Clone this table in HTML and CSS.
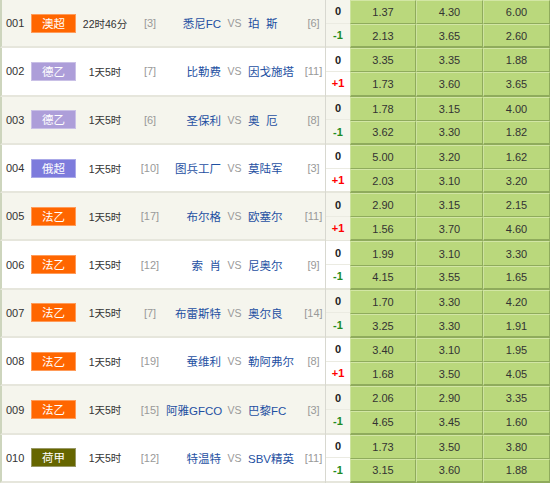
FILE: index.html
```html
<!DOCTYPE html>
<html lang="zh">
<head>
<meta charset="utf-8">
<title>赛事赔率</title>
<link rel="stylesheet" href="styles.css">
</head>
<body>
<div class="board">
  <div class="match alt">
    <div class="info">
      <span class="num">001</span><span class="badge orange">澳超</span><span class="time">22时46分</span><span class="rank">[3]</span><span class="home">悉尼FC</span><span class="vs">VS</span><span class="away">珀&nbsp;&nbsp;斯</span><span class="rank">[6]</span>
    </div>
    <div class="hc"><span class="zero">0</span><span class="minus">-1</span></div>
    <div class="odds"><span>1.37</span><span>4.30</span><span>6.00</span><span>2.13</span><span>3.65</span><span>2.60</span></div>
  </div>
  <div class="match">
    <div class="info">
      <span class="num">002</span><span class="badge purple">德乙</span><span class="time">1天5时</span><span class="rank">[7]</span><span class="home">比勒费</span><span class="vs">VS</span><span class="away">因戈施塔</span><span class="rank">[11]</span>
    </div>
    <div class="hc"><span class="zero">0</span><span class="plus">+1</span></div>
    <div class="odds"><span>3.35</span><span>3.35</span><span>1.88</span><span>1.73</span><span>3.60</span><span>3.65</span></div>
  </div>
  <div class="match alt">
    <div class="info">
      <span class="num">003</span><span class="badge purple">德乙</span><span class="time">1天5时</span><span class="rank">[6]</span><span class="home">圣保利</span><span class="vs">VS</span><span class="away">奥&nbsp;&nbsp;厄</span><span class="rank">[8]</span>
    </div>
    <div class="hc"><span class="zero">0</span><span class="minus">-1</span></div>
    <div class="odds"><span>1.78</span><span>3.15</span><span>4.00</span><span>3.62</span><span>3.30</span><span>1.82</span></div>
  </div>
  <div class="match">
    <div class="info">
      <span class="num">004</span><span class="badge blue">俄超</span><span class="time">1天5时</span><span class="rank">[10]</span><span class="home">图兵工厂</span><span class="vs">VS</span><span class="away">莫陆军</span><span class="rank">[3]</span>
    </div>
    <div class="hc"><span class="zero">0</span><span class="plus">+1</span></div>
    <div class="odds"><span>5.00</span><span>3.20</span><span>1.62</span><span>2.03</span><span>3.10</span><span>3.20</span></div>
  </div>
  <div class="match alt">
    <div class="info">
      <span class="num">005</span><span class="badge orange">法乙</span><span class="time">1天5时</span><span class="rank">[17]</span><span class="home">布尔格</span><span class="vs">VS</span><span class="away">欧塞尔</span><span class="rank">[11]</span>
    </div>
    <div class="hc"><span class="zero">0</span><span class="plus">+1</span></div>
    <div class="odds"><span>2.90</span><span>3.15</span><span>2.15</span><span>1.56</span><span>3.70</span><span>4.60</span></div>
  </div>
  <div class="match">
    <div class="info">
      <span class="num">006</span><span class="badge orange">法乙</span><span class="time">1天5时</span><span class="rank">[12]</span><span class="home">索&nbsp;&nbsp;肖</span><span class="vs">VS</span><span class="away">尼奥尔</span><span class="rank">[9]</span>
    </div>
    <div class="hc"><span class="zero">0</span><span class="minus">-1</span></div>
    <div class="odds"><span>1.99</span><span>3.10</span><span>3.30</span><span>4.15</span><span>3.55</span><span>1.65</span></div>
  </div>
  <div class="match alt">
    <div class="info">
      <span class="num">007</span><span class="badge orange">法乙</span><span class="time">1天5时</span><span class="rank">[7]</span><span class="home">布雷斯特</span><span class="vs">VS</span><span class="away">奥尔良</span><span class="rank">[14]</span>
    </div>
    <div class="hc"><span class="zero">0</span><span class="minus">-1</span></div>
    <div class="odds"><span>1.70</span><span>3.30</span><span>4.20</span><span>3.25</span><span>3.30</span><span>1.91</span></div>
  </div>
  <div class="match">
    <div class="info">
      <span class="num">008</span><span class="badge orange">法乙</span><span class="time">1天5时</span><span class="rank">[19]</span><span class="home">蚕维利</span><span class="vs">VS</span><span class="away">勒阿弗尔</span><span class="rank">[8]</span>
    </div>
    <div class="hc"><span class="zero">0</span><span class="plus">+1</span></div>
    <div class="odds"><span>3.40</span><span>3.10</span><span>1.95</span><span>1.68</span><span>3.50</span><span>4.05</span></div>
  </div>
  <div class="match alt">
    <div class="info">
      <span class="num">009</span><span class="badge orange">法乙</span><span class="time">1天5时</span><span class="rank">[15]</span><span class="home">阿雅GFCO</span><span class="vs">VS</span><span class="away">巴黎FC</span><span class="rank">[3]</span>
    </div>
    <div class="hc"><span class="zero">0</span><span class="minus">-1</span></div>
    <div class="odds"><span>2.06</span><span>2.90</span><span>3.35</span><span>4.65</span><span>3.45</span><span>1.60</span></div>
  </div>
  <div class="match">
    <div class="info">
      <span class="num">010</span><span class="badge olive">荷甲</span><span class="time">1天5时</span><span class="rank">[12]</span><span class="home">特温特</span><span class="vs">VS</span><span class="away">SBV精英</span><span class="rank">[11]</span>
    </div>
    <div class="hc"><span class="zero">0</span><span class="minus">-1</span></div>
    <div class="odds"><span>1.73</span><span>3.50</span><span>3.80</span><span>3.15</span><span>3.60</span><span>1.88</span></div>
  </div>
</div>
</body>
</html>
```
FILE: styles.css
```css
html, body {
  margin: 0;
  padding: 0;
  background: #ffffff;
}

body {
  font-family: "Liberation Sans", "Noto Sans CJK SC", sans-serif;
  font-size: 11px;
  color: #333333;
}

.board {
  width: 550px;
  height: 483px;
  display: flex;
  flex-direction: column;
}

.match {
  flex: 1;
  display: flex;
  background: #ffffff;
  min-height: 0;
}

.match.alt {
  background: #f5f5ed;
}

.info {
  width: 325px;
  display: grid;
  grid-template-columns: 29px 45px 58px 32px 55px 27px 54px 23px;
  align-items: center;
  border-left: 2px solid #cdd5bd;
  border-bottom: 2px solid #e6e6dc;
  box-sizing: border-box;
  white-space: nowrap;
}

.num {
  padding-left: 4px;
  color: #333333;
}

.badge {
  height: 19px;
  line-height: 18px;
  text-align: center;
  color: #ffffff;
  font-size: 11.5px;
  box-sizing: border-box;
  border: 1px solid rgba(255, 255, 255, 0.35);
}

.badge.orange { background: #ff6600; }
.badge.purple { background: #ad9ed9; }
.badge.blue { background: #7d7bdc; }
.badge.olive { background: #666600; border-color: #999966; }

.time {
  text-align: center;
  color: #333333;
  font-size: 10.5px;
}

.rank {
  text-align: center;
  color: #999999;
}

.home {
  text-align: right;
  color: #1e50a2;
  font-size: 11.5px;
  overflow: visible;
}

.vs {
  text-align: center;
  color: #999999;
  font-size: 10.5px;
}

.away {
  text-align: left;
  color: #1e50a2;
  font-size: 11.5px;
}

.hc {
  width: 26px;
  display: flex;
  flex-direction: column;
  border-left: 1px solid #d8d8d0;
  box-sizing: border-box;
  font-weight: bold;
}

.hc span {
  flex: 1;
  display: flex;
  align-items: center;
  justify-content: center;
  border-bottom: 1px solid #ebebe2;
}

.hc .zero { color: #222222; }
.hc .minus { color: #228b22; border-bottom: 2px solid #e6e6dc; }
.hc .plus { color: #ff0000; border-bottom: 2px solid #e6e6dc; }

.odds {
  flex: 1;
  display: grid;
  grid-template-columns: 66px 67px 67px;
  grid-template-rows: 1fr 1fr;
}

.odds span {
  display: flex;
  align-items: center;
  justify-content: center;
  background: #bad87c;
  border-top: 1px solid #d2e6a4;
  border-left: 1px solid #cde3a0;
  border-right: 1px solid #8fab5c;
  border-bottom: 1px solid #8fab5c;
  color: #333333;
}

.odds span:nth-child(n+4) {
  border-bottom: 2px solid #8fab5c;
}
```
